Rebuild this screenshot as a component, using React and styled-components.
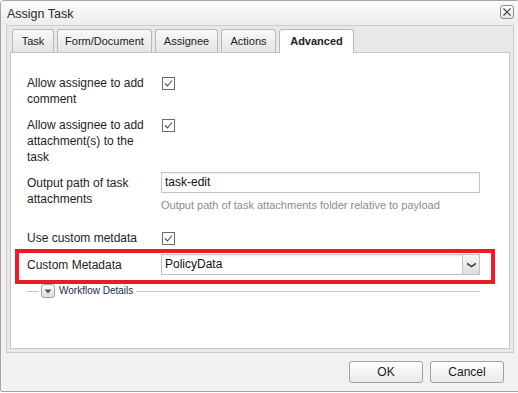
import React from 'react';
import styled, { createGlobalStyle } from 'styled-components';

const Global = createGlobalStyle`
  html, body { margin: 0; padding: 0; background: #ffffff; overflow: hidden; }
  body { font-family: "Liberation Sans", Arial, sans-serif; color: #222; }
  * { box-sizing: border-box; }
`;

const Dialog = styled.div`
  width: 520px;
  height: 392px;
  border: 1px solid #a4a4a4;
  border-radius: 4px 4px 2px 2px;
  background: #f1f1f1;
  display: flex;
  flex-direction: column;
`;

const TitleBar = styled.div`
  height: 24px;
  flex: none;
  display: flex;
  justify-content: space-between;
  align-items: flex-start;
  padding: 4px 5px 0 6px;
  background: linear-gradient(#fbfbfb, #ececec);
  border-radius: 3px 3px 0 0;
`;

const Title = styled.div`
  font-size: 12.5px;
  line-height: 16px;
  color: #2a2a2a;
  padding-top: 1px;
`;

const CloseButton = styled.div`
  width: 14px;
  height: 14px;
  border: 1px solid #8d8d8d;
  border-radius: 3px;
  background: linear-gradient(#ffffff, #e6e6e6);
  display: flex;
  align-items: center;
  justify-content: center;
`;

const TabPanel = styled.div`
  height: 328px;
  flex: none;
  margin: 0 5px;
  border: 1px solid #cdcdcd;
  background: #e8e8e8;
  padding: 0 3px 3px;
  display: flex;
  flex-direction: column;
`;

const TabStrip = styled.div`
  height: 26px;
  flex: none;
  display: flex;
  align-items: flex-end;
  gap: 3px;
  padding: 3px 0 0 2px;
`;

const Tab = styled.div`
  position: relative;
  z-index: ${p => (p.$active ? 2 : 0)};
  width: ${p => p.$w}px;
  height: ${p => (p.$active ? 24 : 23)}px;
  margin-bottom: ${p => (p.$active ? -1 : 0)}px;
  border: 1px solid #b9b9b9;
  border-bottom: none;
  border-radius: 3px 3px 0 0;
  background: ${p => (p.$active ? '#ffffff' : 'linear-gradient(#f9f9f9, #e4e4e4)')};
  font-size: 11px;
  font-weight: ${p => (p.$active ? 700 : 400)};
  color: #222;
  display: flex;
  justify-content: center;
  padding-top: 5px;
  line-height: 13px;
`;

const Content = styled.div`
  flex: 1;
  background: #ffffff;
  border: 1px solid #c6c6c6;
  padding: 19px 0 0 16px;
  display: flex;
  flex-direction: column;
`;

const Row = styled.div`
  display: flex;
  align-items: flex-start;
  margin-bottom: 7px;
`;

const HighlightRow = styled(Row)`
  width: 480px;
  margin: -4px 0 0 -12px;
  border: 4px solid #ec1c24;
  padding: 1px 11px 5px 8px;
`;

const Label = styled.div`
  width: 134px;
  flex: none;
  padding: 3px 9px 0 0;
  font-size: 12px;
  line-height: 16px;
  color: #1e1e1e;
`;

const Field = styled.div`
  width: 319px;
  flex: none;
  display: flex;
  flex-direction: column;
`;

const CheckBox = styled.div`
  width: 13px;
  height: 13px;
  margin: 5px 0 0 1px;
  border: 1px solid #6b6b6b;
  background: #fff;
  display: flex;
`;

const TextInput = styled.div`
  height: 21px;
  border: 1px solid #c4c4c4;
  background: linear-gradient(#f2f2f2 0, #ffffff 3px);
  font-size: 12px;
  line-height: 19px;
  padding-left: 3px;
  color: #111;
`;

const Help = styled.div`
  font-size: 11px;
  line-height: 14px;
  color: #8c8c8c;
  margin-top: 5px;
  padding-bottom: 8px;
`;

const Select = styled.div`
  height: 21px;
  border: 1px solid #c1c1c1;
  background: linear-gradient(#eef0f2 0, #ffffff 3px);
  display: flex;
`;

const SelectValue = styled.div`
  flex: 1;
  font-size: 12px;
  line-height: 19px;
  padding-left: 3px;
  color: #111;
`;

const Trigger = styled.div`
  width: 17px;
  border-left: 1px solid #c4c4c4;
  background: linear-gradient(#f8f8f8, #dcdcdc);
  display: flex;
  align-items: center;
  justify-content: center;
`;

const Fieldset = styled.div`
  width: 453px;
  height: 14px;
  margin-top: 0;
  display: flex;
  align-items: center;
`;

const Line = styled.div`
  height: 1px;
  background: #c8c8c8;
  width: ${p => (p.$w ? `${p.$w}px` : 'auto')};
  flex: ${p => (p.$w ? 'none' : 1)};
`;

const Toggle = styled.div`
  width: 14px;
  height: 14px;
  margin: 0 4px 0 2px;
  border: 1px solid #a2a2a2;
  border-radius: 3px;
  background: linear-gradient(#fbfbfb, #dedede);
  display: flex;
  align-items: center;
  justify-content: center;
`;

const Legend = styled.div`
  font-size: 10px;
  line-height: 12px;
  color: #1d2c44;
  margin-right: 3px;
`;

const Footer = styled.div`
  flex: 1;
  display: flex;
  align-items: center;
  justify-content: flex-end;
  gap: 7px;
  padding: 0 15px 0 0;
`;

const Button = styled.div`
  width: 74px;
  height: 22px;
  border: 1px solid #a0a0a0;
  border-radius: 3px;
  background: linear-gradient(#ffffff, #e9e9e9);
  font-size: 12px;
  line-height: 20px;
  text-align: center;
  color: #1a1a1a;
`;

const Check = () => (
  <CheckBox>
    <svg width="11" height="11" viewBox="0 0 11 11">
      <polyline points="2,5.5 4.5,8 9,2.5" fill="none" stroke="#4a4a4a" strokeWidth="1.1" />
    </svg>
  </CheckBox>
);

const tabs = [
  { label: 'Task', w: 42 },
  { label: 'Form/Document', w: 95 },
  { label: 'Assignee', w: 63 },
  { label: 'Actions', w: 55 },
  { label: 'Advanced', w: 75, active: true },
];

export default function App() {
  return (
    <>
      <Global />
      <Dialog>
        <TitleBar>
          <Title>Assign Task</Title>
          <CloseButton>
            <svg width="10" height="10" viewBox="0 0 10 10">
              <path d="M1.5 1.5 L8.5 8.5 M8.5 1.5 L1.5 8.5" stroke="#444" strokeWidth="1.2" />
            </svg>
          </CloseButton>
        </TitleBar>
        <TabPanel>
          <TabStrip>
            {tabs.map(t => (
              <Tab key={t.label} $w={t.w} $active={t.active}>{t.label}</Tab>
            ))}
          </TabStrip>
          <Content>
            <Row>
              <Label>Allow assignee to add comment</Label>
              <Field><Check /></Field>
            </Row>
            <Row>
              <Label>Allow assignee to add attachment(s) to the task</Label>
              <Field><Check /></Field>
            </Row>
            <Row>
              <Label>Output path of task attachments</Label>
              <Field>
                <TextInput>task-edit</TextInput>
                <Help>Output path of task attachments folder relative to payload</Help>
              </Field>
            </Row>
            <Row>
              <Label>Use custom metdata</Label>
              <Field><Check /></Field>
            </Row>
            <HighlightRow>
              <Label>Custom Metadata</Label>
              <Field>
                <Select>
                  <SelectValue>PolicyData</SelectValue>
                  <Trigger>
                    <svg width="9" height="6" viewBox="0 0 9 6">
                      <path d="M0 0.5 L4.5 3.5 L9 0.5 L9 2.5 L4.5 5.5 L0 2.5 Z" fill="#444" />
                    </svg>
                  </Trigger>
                </Select>
              </Field>
            </HighlightRow>
            <Fieldset>
              <Line $w={12} />
              <Toggle>
                <svg width="8" height="5" viewBox="0 0 8 5">
                  <path d="M0.5 0.5 L7.5 0.5 L4 4.5 Z" fill="#555" />
                </svg>
              </Toggle>
              <Legend>Workflow Details</Legend>
              <Line />
            </Fieldset>
          </Content>
        </TabPanel>
        <Footer>
          <Button>OK</Button>
          <Button>Cancel</Button>
        </Footer>
      </Dialog>
    </>
  );
}
